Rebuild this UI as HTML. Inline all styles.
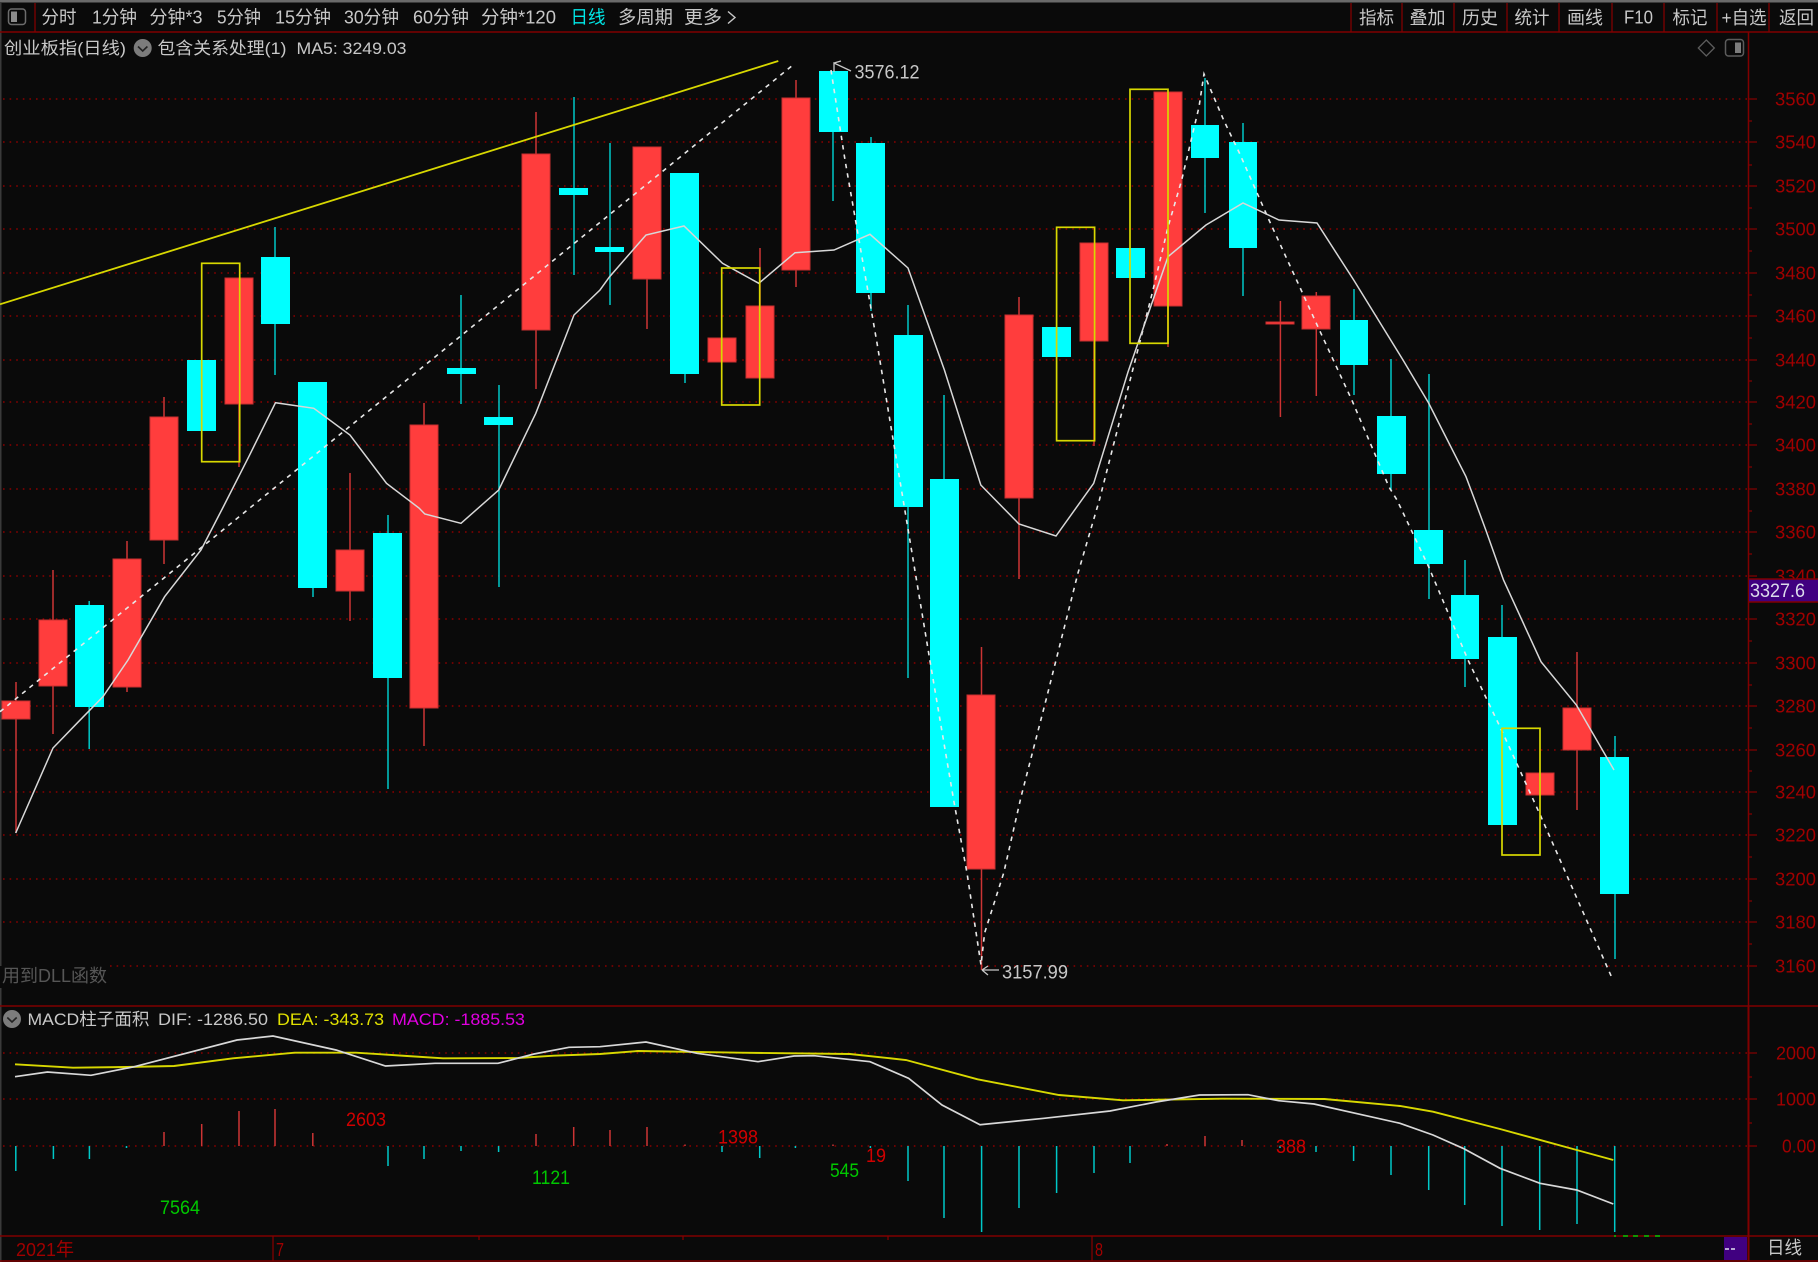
<!DOCTYPE html>
<html lang="zh">
<head>
<meta charset="utf-8">
<title>创业板指(日线)</title>
<style>
html,body{margin:0;padding:0;background:#0a0a0a;width:1818px;height:1262px;overflow:hidden}
svg{display:block;filter:blur(.35px)}
text{font-family:"Liberation Sans","Noto Sans CJK SC",sans-serif;font-size:18px;fill:#c8c8c8}
.ax text{fill:#a00000;font-size:18.5px}
.s{font-size:17px}
.m{font-size:19.5px}
</style>
</head>
<body>
<svg xmlns="http://www.w3.org/2000/svg" width="1818" height="1262" viewBox="0 0 1818 1262">
<rect width="1818" height="1262" fill="#0a0a0a"/>
<rect width="1818" height="2.5" fill="#6a6a6a"/>
<rect width="1.5" height="1262" y="2" fill="#3a3a3a"/>

<!-- grid -->
<path d="M3 99H1748M3 142H1748M3 186H1748M3 229H1748M3 273H1748M3 316H1748M3 360H1748M3 402H1748M3 445H1748M3 489H1748M3 532H1748M3 576H1748M3 619H1748M3 663H1748M3 706H1748M3 750H1748M3 792H1748M3 835H1748M3 879H1748M3 922H1748M110 966H1748M3 1053H1748M3 1099H1748M3 1146H1748" stroke="#8a0000" stroke-width="1.4" stroke-dasharray="1.6 5" fill="none"/>

<!-- frame lines -->
<path d="M0 32H1818M0 1006H1818M0 1236H1818M0 1261H1818" stroke="#800000" stroke-width="1.6" fill="none"/>
<path d="M35 3V32M1351 3V32M1402 3V32M1454 3V32M1507 3V32M1559 3V32M1612 3V32M1664 3V32M1717 3V32M1769 3V32M273 1236V1261M1092 1236V1261M479 1236V1240M683 1236V1240M888 1236V1240" stroke="#800000" stroke-width="1.3" fill="none"/>
<path d="M1748.5 32V1006" stroke="#800000" stroke-width="1.5" fill="none"/>
<path d="M1748.5 1006V1261" stroke="#800000" stroke-width="2" fill="none"/>
<path d="M1748 99h9M1748 142h9M1748 186h9M1748 229h9M1748 273h9M1748 316h9M1748 360h9M1748 402h9M1748 445h9M1748 489h9M1748 532h9M1748 576h9M1748 619h9M1748 663h9M1748 706h9M1748 750h9M1748 792h9M1748 835h9M1748 879h9M1748 922h9M1748 966h9M1748 1053h9M1748 1099h9M1748 1146h9M1748 121h4M1748 165h4M1748 208h4M1748 251h4M1748 295h4M1748 338h4M1748 381h4M1748 424h4M1748 467h4M1748 511h4M1748 554h4M1748 598h4M1748 641h4M1748 685h4M1748 728h4M1748 771h4M1748 814h4M1748 857h4M1748 901h4M1748 944h4M1748 1077h4M1748 1123h4" stroke="#800000" stroke-width="1.3" fill="none"/>

<!-- wicks -->
<path d="M16 682V833M53 570V734M127 541V692M164 397V564M239 404V467M350 473V621M424 403V746M536 112V389M647 279V329M760 248V306M796 80V287M981.5 647V970M1019 297V579M1094 341V446M1168 306V347M1280.4 301V417M1316.3 292V396M1577 652V810" stroke="#cc3434" stroke-width="1.5" fill="none"/>
<path d="M89.2 601V749M275 227V375M313 588V597M388 515V789M461 295V404M499 385V587M574 97V275M610 143V305M685 374V383M833 132V201M871 137V311M908 305V678M944 395V479M1205 78V213M1243 123V296M1354 289V395M1391 359V490M1429 374V599M1465 560V687M1502 605V637M1615 736V959" stroke="#00c8c8" stroke-width="1.5" fill="none"/>

<!-- red bodies -->
<g fill="#ff3d3d" stroke="#c83030" stroke-width="1" shape-rendering="crispEdges">
<rect x="2" y="701" width="28" height="18"/>
<rect x="39" y="620" width="28" height="66"/>
<rect x="113" y="559" width="28" height="128"/>
<rect x="150" y="417" width="28" height="123"/>
<rect x="225" y="278" width="28" height="126"/>
<rect x="336" y="550" width="28" height="41"/>
<rect x="410" y="425" width="28" height="283"/>
<rect x="522" y="154" width="28" height="176"/>
<rect x="633" y="147" width="28" height="132"/>
<rect x="708" y="338" width="28" height="24"/>
<rect x="746" y="306" width="28" height="72"/>
<rect x="782" y="98" width="28" height="172"/>
<rect x="967" y="695" width="28" height="174"/>
<rect x="1005" y="315" width="28" height="183"/>
<rect x="1080" y="243" width="28" height="98"/>
<rect x="1154" y="92" width="28" height="214"/>
<rect x="1266" y="322" width="28" height="2"/>
<rect x="1302" y="296" width="28" height="33"/>
<rect x="1526" y="773" width="28" height="22"/>
<rect x="1563" y="708" width="28" height="42"/>
</g>
<!-- cyan bodies -->
<g fill="#00ffff" shape-rendering="crispEdges">
<rect x="75" y="605" width="29" height="102"/>
<rect x="187" y="360" width="29" height="71"/>
<rect x="261" y="257" width="29" height="67"/>
<rect x="298" y="382" width="29" height="206"/>
<rect x="373" y="533" width="29" height="145"/>
<rect x="447" y="368" width="29" height="6"/>
<rect x="484" y="417" width="29" height="8"/>
<rect x="559" y="188" width="29" height="7"/>
<rect x="595" y="247" width="29" height="5"/>
<rect x="670" y="173" width="29" height="201"/>
<rect x="819" y="71" width="29" height="61"/>
<rect x="856" y="143" width="29" height="150"/>
<rect x="894" y="335" width="29" height="172"/>
<rect x="930" y="479" width="29" height="328"/>
<rect x="1042" y="327" width="29" height="30"/>
<rect x="1116" y="248" width="29" height="30"/>
<rect x="1191" y="125" width="28" height="33"/>
<rect x="1229" y="142" width="28" height="106"/>
<rect x="1340" y="320" width="28" height="45"/>
<rect x="1377" y="416" width="29" height="58"/>
<rect x="1414" y="530" width="29" height="34"/>
<rect x="1451" y="595" width="28" height="64"/>
<rect x="1488" y="637" width="29" height="188"/>
<rect x="1600" y="757" width="29" height="137"/>
</g>

<!-- trend line -->
<path d="M0 304.3L778.3 61" stroke="#d8d800" stroke-width="1.8" fill="none"/>

<!-- zigzag dashed -->
<path d="M0 711.7L793 65M831 70L845 160L877 343L906 517L931 667L954 802L967 873L981 965L984.6 933L1003.7 873L1021 797L1046 700L1078 573L1099.4 500L1139.6 343L1153 290L1168 227L1181.7 180L1199 107L1204 74L1223.6 120L1239.4 153L1269 220L1302.5 293L1318 327L1351.8 400L1389 487L1397 500L1428.6 566.7L1468 660L1501.5 730L1541 816.7L1612 978" stroke="#e8e8e8" stroke-width="1.6" stroke-dasharray="4.500 5" fill="none"/>

<!-- MA5 -->
<path d="M15.7 833L53 748L78.5 721.7L103 696.7L128 660L164.6 596.7L201 550L222.7 508L248.8 456.7L275.5 402.7L313.8 408.3L350 435L386.5 483.3L419 508L424.8 514L461 523.3L498.7 490L535.8 413.3L574 315L600 290L609.6 276.7L646 235L684 226L722.5 263.3L758.8 283.3L795 252.7L834 250L870 234.3L908 268L944.4 370L980.8 485L1019 524L1056 536L1093.7 483.3L1128 372L1168 256.7L1200 230L1206 225L1243 203L1279 220L1317 223L1353.7 280L1403 360L1428.6 403L1466 476.7L1474 498L1485.8 530L1503.5 580L1541 661.7L1576.4 705L1614 770" stroke="#d8d8d8" stroke-width="1.5" fill="none"/>

<!-- yellow rects -->
<g fill="none" stroke="#d8d800" stroke-width="1.7">
<rect x="201.7" y="263.3" width="38" height="198.4"/>
<rect x="721.7" y="268" width="38" height="137"/>
<rect x="1056.6" y="227.3" width="38" height="213.4"/>
<rect x="1130" y="89.3" width="38" height="254"/>
<rect x="1502" y="728.3" width="38" height="126.7"/>
</g>

<!-- annotations -->
<path d="M834 72V63L851 71M834 63L841 61" stroke="#c8c8c8" stroke-width="1.3" fill="none"/>
<text x="854.5" y="78.500" textLength="65" lengthAdjust="spacingAndGlyphs" style="font-size:19px">3576.12</text>
<path d="M982 970H999M982 970L988 966M982 970L988 975" stroke="#c8c8c8" stroke-width="1.3" fill="none"/>
<text x="1002" y="978.500" textLength="66" lengthAdjust="spacingAndGlyphs" style="font-size:19px">3157.99</text>
<rect x="0" y="966" width="109" height="22" fill="#0a0a0a"/>
<text x="2" y="982" textLength="105" lengthAdjust="spacingAndGlyphs" style="fill:#565656">用到DLL函数</text>

<!-- MACD bars -->
<path d="M164 1146V1132M201.7 1146V1124M239 1146V1111M275 1146V1109M312.8 1146V1133M536 1146V1134M573.7 1146V1127M610 1146V1130M647 1146V1127M685 1146V1144.5M833 1146V1144.5M1167 1146V1144M1205 1146V1136M1242 1146V1140" stroke="#cc3434" stroke-width="1.5" fill="none"/>
<path d="M15.8 1146V1171M53.4 1146V1159M89.4 1146V1159M126.5 1146V1148M388 1146V1166M424 1146V1159M461 1146V1151M498.6 1146V1152M722 1146V1152M759.7 1146V1158M795.4 1146V1148M870.4 1146V1148M908 1146V1181M944 1146V1218M981.6 1146V1232M1019 1146V1208M1056.6 1146V1193M1094 1146V1173M1130 1146V1163M1280 1146V1148M1316 1146V1152M1353.6 1146V1161M1391 1146V1175M1428.7 1146V1190M1464.7 1146V1205M1502 1146V1226M1539.7 1146V1230M1577 1146V1224M1614.7 1146V1232" stroke="#00c8c8" stroke-width="1.5" fill="none"/>

<!-- DEA -->
<path d="M15 1064.3L73 1067.7L126.5 1067L174 1066L233 1058.3L294.6 1052.7L356 1052.7L407 1056L443 1058.3L518 1058L553.6 1055.7L600 1054L638 1051L740 1052.7L850 1054L906 1060L977.6 1079.3L1059 1095L1123 1100.3L1222.4 1098.7L1324.5 1099L1400 1106L1433 1111.7L1500 1129L1576.7 1150L1613.3 1160" stroke="#d8d800" stroke-width="1.9" fill="none"/>
<!-- DIF -->
<path d="M15 1076.7L47.4 1072L91 1075.3L134.4 1066.7L237 1040L273 1036L336 1050L385.5 1066L435 1063.3L498 1063.3L534 1054L569 1047.3L600 1046.7L646 1042L697 1053.3L758 1061.7L794 1056L814 1055.7L870 1061.7L908.7 1078.3L942 1105L980 1124.7L1044 1118.3L1110 1111L1156 1102L1199.5 1095L1248 1094.7L1278.6 1100.7L1314 1104L1400 1123.3L1433 1135L1463 1148.3L1500 1168.3L1540 1183.3L1576.7 1190L1613.3 1204" stroke="#d8d8d8" stroke-width="1.7" fill="none"/>

<!-- MACD area labels -->
<text class="m" x="346" y="1126" textLength="40" lengthAdjust="spacingAndGlyphs" style="fill:#d00000">2603</text>
<text class="m" x="718" y="1143.500" textLength="40" lengthAdjust="spacingAndGlyphs" style="fill:#d00000">1398</text>
<text class="m" x="866" y="1162" textLength="20" lengthAdjust="spacingAndGlyphs" style="fill:#d00000">19</text>
<text class="m" x="1276" y="1153" textLength="30" lengthAdjust="spacingAndGlyphs" style="fill:#d00000">388</text>
<text class="m" x="160" y="1214" textLength="40" lengthAdjust="spacingAndGlyphs" style="fill:#00c800">7564</text>
<text class="m" x="532" y="1184" textLength="38" lengthAdjust="spacingAndGlyphs" style="fill:#00c800">1121</text>
<text class="m" x="830" y="1177" textLength="29" lengthAdjust="spacingAndGlyphs" style="fill:#00c800">545</text>
<path d="M1614 1236h2M1623 1236h5M1633 1236h5M1644 1236h5M1655 1236h5" stroke="#00c800" stroke-width="1.5" fill="none"/>

<!-- axis labels -->
<g class="ax" transform="translate(0 .6)">
<text x="1775" y="105" textLength="41" lengthAdjust="spacingAndGlyphs">3560</text>
<text x="1775" y="148" textLength="41" lengthAdjust="spacingAndGlyphs">3540</text>
<text x="1775" y="192" textLength="41" lengthAdjust="spacingAndGlyphs">3520</text>
<text x="1775" y="235" textLength="41" lengthAdjust="spacingAndGlyphs">3500</text>
<text x="1775" y="279" textLength="41" lengthAdjust="spacingAndGlyphs">3480</text>
<text x="1775" y="322" textLength="41" lengthAdjust="spacingAndGlyphs">3460</text>
<text x="1775" y="366" textLength="41" lengthAdjust="spacingAndGlyphs">3440</text>
<text x="1775" y="408" textLength="41" lengthAdjust="spacingAndGlyphs">3420</text>
<text x="1775" y="451" textLength="41" lengthAdjust="spacingAndGlyphs">3400</text>
<text x="1775" y="495" textLength="41" lengthAdjust="spacingAndGlyphs">3380</text>
<text x="1775" y="538" textLength="41" lengthAdjust="spacingAndGlyphs">3360</text>
<text x="1775" y="582" textLength="41" lengthAdjust="spacingAndGlyphs">3340</text>
<text x="1775" y="625" textLength="41" lengthAdjust="spacingAndGlyphs">3320</text>
<text x="1775" y="669" textLength="41" lengthAdjust="spacingAndGlyphs">3300</text>
<text x="1775" y="712" textLength="41" lengthAdjust="spacingAndGlyphs">3280</text>
<text x="1775" y="756" textLength="41" lengthAdjust="spacingAndGlyphs">3260</text>
<text x="1775" y="798" textLength="41" lengthAdjust="spacingAndGlyphs">3240</text>
<text x="1775" y="841" textLength="41" lengthAdjust="spacingAndGlyphs">3220</text>
<text x="1775" y="885" textLength="41" lengthAdjust="spacingAndGlyphs">3200</text>
<text x="1775" y="928" textLength="41" lengthAdjust="spacingAndGlyphs">3180</text>
<text x="1775" y="972" textLength="41" lengthAdjust="spacingAndGlyphs">3160</text>
<text x="1776" y="1059" textLength="40" lengthAdjust="spacingAndGlyphs">2000</text>
<text x="1776" y="1105" textLength="40" lengthAdjust="spacingAndGlyphs">1000</text>
<text x="1782" y="1152" textLength="34" lengthAdjust="spacingAndGlyphs">0.00</text>
<text x="16" y="1255.500" textLength="58" lengthAdjust="spacingAndGlyphs">2021年</text>
<text x="276" y="1255.500" textLength="8" lengthAdjust="spacingAndGlyphs">7</text>
<text x="1095" y="1255.500" textLength="8" lengthAdjust="spacingAndGlyphs">8</text>
</g>

<!-- price tag -->
<rect x="1749" y="579" width="69" height="23" fill="#400080"/>
<path d="M1749 579H1818M1749 602H1818" stroke="#800000" stroke-width="1.5"/>
<text x="1750" y="597" textLength="55" lengthAdjust="spacingAndGlyphs" style="fill:#dcdcec;font-size:19px">3327.6</text>

<!-- bottom right -->
<rect x="1724" y="1237" width="23" height="23" fill="#400080"/>
<path d="M1725 1249h4M1731 1249h4" stroke="#e0e0f0" stroke-width="1.5"/>
<text x="1767" y="1254" textLength="35" lengthAdjust="spacingAndGlyphs">日线</text>

<!-- toolbar left -->
<rect x="8.500" y="9" width="17" height="15.500" rx="3" fill="none" stroke="#6c6c6c" stroke-width="1.5"/>
<rect x="11" y="11.500" width="6" height="10.500" fill="#8c8c8c"/>
<text x="41.500" y="23.500" textLength="35" lengthAdjust="spacingAndGlyphs">分时</text>
<text x="92" y="23.500" textLength="45" lengthAdjust="spacingAndGlyphs">1分钟</text>
<text x="149.500" y="23.500" textLength="53" lengthAdjust="spacingAndGlyphs">分钟*3</text>
<text x="217" y="23.500" textLength="44" lengthAdjust="spacingAndGlyphs">5分钟</text>
<text x="275" y="23.500" textLength="56" lengthAdjust="spacingAndGlyphs">15分钟</text>
<text x="344" y="23.500" textLength="55" lengthAdjust="spacingAndGlyphs">30分钟</text>
<text x="413" y="23.500" textLength="56" lengthAdjust="spacingAndGlyphs">60分钟</text>
<text x="481" y="23.500" textLength="75" lengthAdjust="spacingAndGlyphs">分钟*120</text>
<text x="570.500" y="23.500" textLength="35" lengthAdjust="spacingAndGlyphs" style="fill:#00e8e8">日线</text>
<text x="618" y="23.500" textLength="55" lengthAdjust="spacingAndGlyphs">多周期</text>
<text x="684" y="23.500" textLength="38" lengthAdjust="spacingAndGlyphs">更多</text>
<path d="M728 11.500L735 17.500L728 23.500" stroke="#c8c8c8" stroke-width="1.4" fill="none"/>

<!-- toolbar right -->
<text x="1359" y="24" textLength="35" lengthAdjust="spacingAndGlyphs">指标</text>
<text x="1409.500" y="24" textLength="36" lengthAdjust="spacingAndGlyphs">叠加</text>
<text x="1462" y="24" textLength="36" lengthAdjust="spacingAndGlyphs">历史</text>
<text x="1514.500" y="24" textLength="35" lengthAdjust="spacingAndGlyphs">统计</text>
<text x="1567" y="24" textLength="36" lengthAdjust="spacingAndGlyphs">画线</text>
<text x="1624" y="23.500" textLength="29" lengthAdjust="spacingAndGlyphs">F10</text>
<text x="1672.500" y="24" textLength="35" lengthAdjust="spacingAndGlyphs">标记</text>
<text x="1721.500" y="24" textLength="45" lengthAdjust="spacingAndGlyphs">+自选</text>
<text x="1779" y="24" textLength="35" lengthAdjust="spacingAndGlyphs">返回</text>

<!-- header row -->
<text x="4" y="54" textLength="122" lengthAdjust="spacingAndGlyphs" class="s">创业板指(日线)</text>
<circle cx="142.700" cy="48" r="9" fill="#7c7c7c"/>
<path d="M138 46.500L142.700 51L147.400 46.500" stroke="#222" stroke-width="1.6" fill="none"/>
<text x="157.500" y="54" textLength="129" lengthAdjust="spacingAndGlyphs" class="s">包含关系处理(1)</text>
<text x="296.500" y="54" textLength="110" lengthAdjust="spacingAndGlyphs" class="s">MA5: 3249.03</text>
<path d="M1706.300 40L1714.300 48L1706.300 56L1698.300 48Z" stroke="#5c5c5c" stroke-width="1.3" fill="none"/>
<rect x="1725.500" y="39.500" width="18" height="16.500" rx="3" fill="none" stroke="#5c5c5c" stroke-width="1.5"/>
<rect x="1735" y="42.500" width="6" height="10.500" fill="#7c7c7c"/>

<!-- MACD header -->
<circle cx="12" cy="1019" r="9" fill="#7c7c7c"/>
<path d="M7.300 1017.500L12 1022L16.700 1017.500" stroke="#222" stroke-width="1.6" fill="none"/>
<text x="27.500" y="1025" textLength="122" lengthAdjust="spacingAndGlyphs" class="s">MACD柱子面积</text>
<text x="158" y="1025" textLength="110" lengthAdjust="spacingAndGlyphs" class="s">DIF: -1286.50</text>
<text x="277" y="1025" textLength="107" lengthAdjust="spacingAndGlyphs" class="s" style="fill:#e0e000">DEA: -343.73</text>
<text x="392" y="1025" textLength="133" lengthAdjust="spacingAndGlyphs" class="s" style="fill:#e000e0">MACD: -1885.53</text>
</svg>
</body>
</html>
